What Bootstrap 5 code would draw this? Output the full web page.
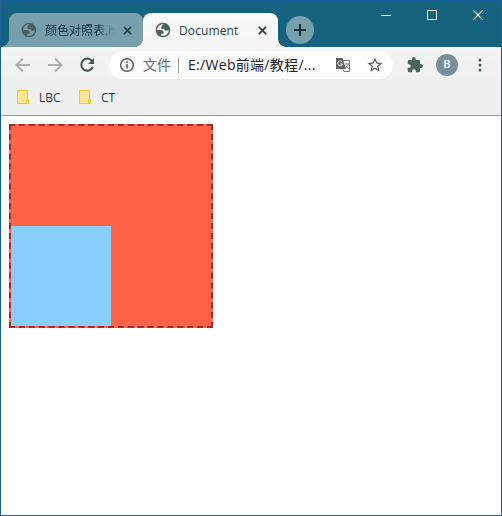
<!DOCTYPE html>
<html lang="zh">
<head>
<meta charset="utf-8">
<meta name="viewport" content="width=device-width, initial-scale=1">
<title>Document</title>
<link href="https://cdn.jsdelivr.net/npm/bootstrap@5.3.0/dist/css/bootstrap.min.css" rel="stylesheet">
<style>
body{font-family:"Open Sans","Noto Sans CJK SC",sans-serif;font-size:12px;line-height:18px;color:#1f3a42}
.win{width:502px;height:516px;border:1px solid #1b5f9b;border-top-color:#155fa0}
svg{display:block;flex:none}
.titlebar{height:46px;background:#14627e}
.tabs{padding:12px 0 0 0}
.tab-item{height:34px;padding:0 11px 0 12px}
.tab-off{width:134px;margin-left:8px;background:#789fac;border-radius:8px 8px 8px 0;color:#17343e;position:relative}
.tab-off::before{content:"";position:absolute;left:-8px;bottom:0;width:8px;height:8px;background:radial-gradient(circle at 0 0,transparent 7.5px,#789fac 8px)}
.tab-on{width:135px;background:linear-gradient(#fafafa,#f4f4f4);border-radius:8px 8px 0 0;color:#2b444c;position:relative}
.tab-on::before,.tab-on::after{content:"";position:absolute;bottom:0;width:8px;height:8px}
.tab-on::before{left:-8px;background:radial-gradient(circle at 0 0,transparent 7.5px,#f4f4f4 8px)}
.tab-on::after{right:-8px;background:radial-gradient(circle at 100% 0,transparent 7.5px,#f4f4f4 8px)}
.tab-label{margin-left:8px;width:74px;padding-top:2px;letter-spacing:.12px}
.fade-end{letter-spacing:0;-webkit-mask-image:linear-gradient(90deg,#000 72%,transparent 96%);mask-image:linear-gradient(90deg,#000 72%,transparent 96%)}
.plus{width:28px;height:28px;background:#789fac;margin:3px 0 0 8px}
.controls{padding:9px 18px 0 0;gap:36px}
.toolbar{height:69px;background:linear-gradient(#f5f5f5,#efefef 50%);border-bottom:1px solid #999}
.navrow{height:36px;padding:0 0 0 13px}
.nav-gap{margin-left:14px}
.omni{width:284px;height:28px;background:#fcfcfc;margin-left:13px;padding:0 9px;font-size:14px;color:#222}
.scheme{color:#666b6e;margin-left:7px}
.sep{width:1px;height:15px;background:#999;margin:0 9px 0 7px}
.url{letter-spacing:.3px}
.star{margin-left:15px}
.avatar{width:22px;height:22px;background:#78909c;color:#fff;font-family:Roboto,sans-serif;font-size:11px;font-weight:500;margin-left:13px}
.dots{margin-left:20px}
.marks{padding:2px 0 0 16px;height:28px;color:#1f3f4a}
.marks svg{margin-bottom:2px}
.mark-label{margin-left:10px}
.mark-wide{width:40px}
.page{padding:8px}
.outer{width:204px;height:204px;background:tomato;border:2px dashed brown}
.inner{width:100px;height:100px;background:lightskyblue}
</style>
<script src="https://cdn.jsdelivr.net/npm/bootstrap@5.3.0/dist/js/bootstrap.bundle.min.js"></script>
</head>
<body class="bg-white overflow-hidden">
<svg class="d-none">
<symbol id="globe" viewBox="1 1 22 22"><path fill-rule="evenodd" d="M12 2C6.480 2 2 6.480 2 12s4.480 10 10 10 10-4.480 10-10S17.520 2 12 2zM4 12h4.400c3.400 0 4.900 1.700 4.600 5.100H9.500v2.500c3.700 1.200 7.700-.5 9.500-3.900.7-1.200 1-2.500 1-3.800-.7.700-1.700 1.100-2.900 1.100-2.100 0-3.200-.8-3.200-2.500H9.800V7.800c-.2-1.900.8-2.800 2.800-2.800V4.100C7.900 3.800 4 7.400 4 12z" fill="#4b5f5c"/></symbol>
<symbol id="cross" viewBox="0 0 9 9"><path d="M.9.900l7.200 7.200M8.100.900L.9 8.100" stroke="#29423f" stroke-width="1.700"/></symbol>
<symbol id="folder" viewBox="0 0 12 14"><path d="M.5.500h10v9h1v4H.5z" fill="#ffe591" stroke="#e8c63f"/><path d="M9.500 13V9.500" stroke="#e8c63f"/></symbol>
</svg>
<div class="win d-flex flex-column bg-white">
 <header class="titlebar d-flex justify-content-between">
  <div class="tabs d-flex">
   <div class="tab-item tab-off d-flex align-items-center"><svg width="16" height="16"><use href="#globe"/></svg><span class="tab-label fade-end text-nowrap overflow-hidden">颜色对照表.h</span><svg class="ms-auto" width="9" height="9"><use href="#cross"/></svg></div>
   <div class="tab-item tab-on d-flex align-items-center"><svg width="16" height="16"><use href="#globe"/></svg><span class="tab-label text-nowrap">Document</span><svg class="ms-auto" width="9" height="9"><use href="#cross"/></svg></div>
   <div class="plus rounded-circle d-flex align-items-center justify-content-center"><svg width="12" height="12"><path d="M0 6h12M6 0v12" stroke="#162e36" stroke-width="2"/></svg></div>
  </div>
  <div class="controls d-flex">
   <svg width="10" height="10"><path d="M0 5.500h10" stroke="#fff"/></svg>
   <svg width="10" height="10"><path d="M.5.500h9v9h-9z" fill="none" stroke="#fff"/></svg>
   <svg width="10" height="10"><path d="M0 0l10 10M10 0L0 10" stroke="#fff" stroke-width="1.200"/></svg>
  </div>
 </header>
 <section class="toolbar">
  <div class="navrow d-flex align-items-center">
   <svg width="18" height="18" viewBox="0 0 18 18"><path d="M16 9H3M9 2.500L2.500 9 9 15.500" fill="none" stroke="#a9b2b0" stroke-width="1.900"/></svg>
   <svg class="nav-gap" width="18" height="18" viewBox="0 0 18 18"><path d="M2 9h13M9 2.500L15.500 9 9 15.500" fill="none" stroke="#a9b2b0" stroke-width="1.900"/></svg>
   <svg class="nav-gap" width="18" height="18" viewBox="0 0 18 18"><path d="M14.200 5.200A6 6 0 1 0 14.800 11" fill="none" stroke="#435a55" stroke-width="2.100"/><path d="M16 2v6h-6z" fill="#435a55"/></svg>
   <div class="omni rounded-pill d-flex align-items-center">
    <svg width="18" height="18" viewBox="0 0 18 18"><circle cx="9" cy="9" r="6.300" fill="none" stroke="#555b5e" stroke-width="1.500"/><path d="M9 8v4.500M9 5.300v1.600" stroke="#555b5e" stroke-width="1.600"/></svg>
    <span class="scheme text-nowrap">文件</span><span class="sep"></span><span class="text-nowrap url">E:/Web前端/教程/...</span>
    <svg class="ms-auto" width="16" height="16" viewBox="0 0 16 16"><path d="M8 3.500h6.500v11H9l-1-2" fill="#fcfcfc" stroke="#777"/><path d="M1 1h6.500l3.500 11H1z" fill="#606060"/><path d="M7.300 5.300A2.400 2.400 0 1 0 7.500 7H5.400" fill="none" stroke="#fcfcfc"/><path d="M10 7h4M12 6v1M13 7.500c-.4 1.500-1 2.200-2 3M11 8.500l2.500 3" fill="none" stroke="#777" stroke-width=".9"/></svg>
    <svg class="star" width="18" height="18" viewBox="0 0 24 24"><path d="M22 9.240l-7.190-.62L12 2 9.190 8.630 2 9.240l5.460 4.730L5.820 21 12 17.270 18.180 21l-1.630-7.030L22 9.240zM12 15.400l-3.760 2.270 1-4.280-3.320-2.880 4.380-.38L12 6.100l1.710 4.040 4.380.38-3.320 2.880 1 4.280L12 15.400z" fill="#555b5e"/></svg>
   </div>
   <svg class="nav-gap" width="16" height="16" viewBox="1 1 22 22"><path d="M20.500 11H19V7c0-1.100-.9-2-2-2h-4V3.500a2.500 2.500 0 0 0-5 0V5H4c-1.100 0-2 .9-2 2v3.800h1.500a2.700 2.700 0 0 1 0 5.400H2V20c0 1.100.9 2 2 2h3.800v-1.500a2.700 2.700 0 0 1 5.400 0V22H17c1.100 0 2-.9 2-2v-4h1.500a2.500 2.500 0 0 0 0-5z" fill="#4b625d"/></svg>
   <div class="avatar rounded-circle d-flex align-items-center justify-content-center">B</div>
   <svg class="dots" width="4" height="14" viewBox="0 0 4 14"><g fill="#435a55"><circle cx="2" cy="2" r="1.500"/><circle cx="2" cy="7" r="1.500"/><circle cx="2" cy="12" r="1.500"/></g></svg>
  </div>
  <div class="marks d-flex align-items-center">
   <svg width="12" height="14"><use href="#folder"/></svg><span class="mark-label mark-wide">LBC</span>
   <svg width="12" height="14"><use href="#folder"/></svg><span class="mark-label">CT</span>
  </div>
 </section>
 <main class="page">
  <div class="outer d-flex align-items-end"><div class="inner"></div></div>
 </main>
</div>
</body>
</html>
